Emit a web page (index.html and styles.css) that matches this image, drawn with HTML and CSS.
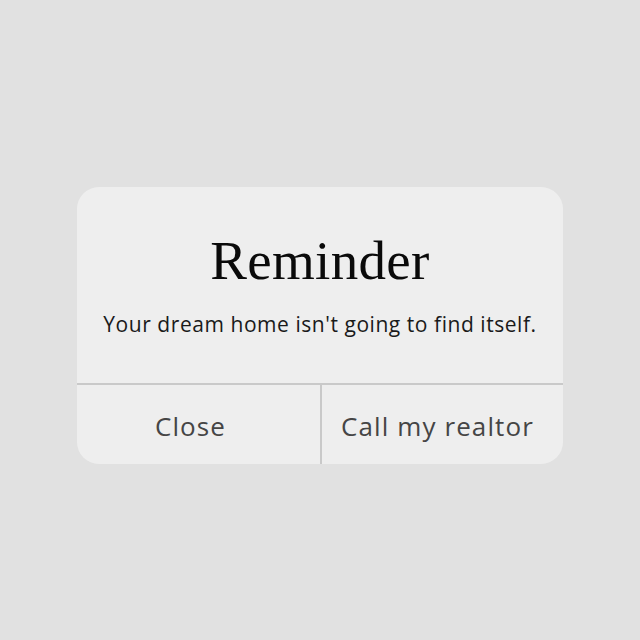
FILE: index.html
```html
<!DOCTYPE html>
<html>
<head>
<meta charset="utf-8">
<link rel="stylesheet" href="styles.css">
</head>
<body>
<div class="page">
  <div class="alert">
    <div class="alert-body">
      <h1 class="title">Reminder</h1>
      <p class="message">Your dream home isn't going to find itself.</p>
    </div>
    <div class="actions">
      <div class="action action-left">Close</div>
      <div class="action action-right">Call my realtor</div>
    </div>
  </div>
</div>
</body>
</html>
```

FILE: styles.css
```css
html, body {
  margin: 0;
  padding: 0;
  background: #e1e1e1;
}
.page {
  width: 640px;
  height: 640px;
  display: flex;
  justify-content: center;
  align-items: flex-start;
  padding-top: 187px;
  box-sizing: border-box;
}
.alert {
  width: 486px;
  height: 277px;
  background: #eeeeee;
  border-radius: 22px;
  display: flex;
  flex-direction: column;
  overflow: hidden;
}
.alert-body {
  height: 198px;
  display: flex;
  flex-direction: column;
  align-items: center;
  border-bottom: 2px solid #c9c9c9;
  box-sizing: border-box;
}
.title {
  margin: 44px 0 0 0;
  font-family: "Liberation Serif", "DejaVu Serif", serif;
  font-weight: normal;
  font-size: 55px;
  line-height: 60px;
  letter-spacing: 0.3px;
  color: #0a0a0a;
}
.message {
  margin: 19px 0 0 0;
  font-family: "Open Sans", "Lato", sans-serif;
  font-size: 21px;
  line-height: 28px;
  letter-spacing: 0.55px;
  color: #1a1a1a;
  white-space: nowrap;
}
.actions {
  flex: 1;
  display: flex;
}
.action {
  flex: 0 0 50%;
  box-sizing: border-box;
  display: flex;
  align-items: center;
  justify-content: center;
  font-family: "Open Sans", "Lato", sans-serif;
  font-size: 26px;
  letter-spacing: 1.1px;
  color: #454545;
  padding-top: 2px;
}
.action-left {
  padding-right: 16px;
}
.action-right {
  border-left: 2px solid #c9c9c9;
  padding-right: 10px;
}
```
